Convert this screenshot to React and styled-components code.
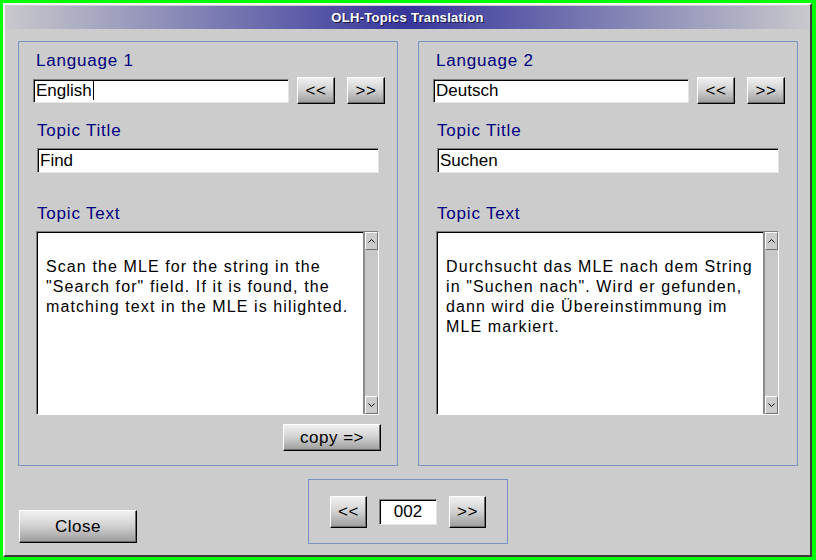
import React from "react";
import styled, { createGlobalStyle } from "styled-components";

const Global = createGlobalStyle`
  html, body {
    margin: 0;
    padding: 0;
    background: #00ff00;
  }
  body {
    font-family: "Liberation Sans", Arial, sans-serif;
  }
`;

const Window = styled.div`
  box-sizing: border-box;
  margin: 3px;
  width: 809px;
  height: 554px;
  background: #cccccc;
  border: 2px solid;
  border-color: #f4f4f4 #3a3a3a #3a3a3a #f4f4f4;
  padding: 1px;
  display: flex;
  flex-direction: column;
`;

const TitleBar = styled.div`
  height: 23px;
  display: flex;
  align-items: center;
  justify-content: center;
  background: linear-gradient(to right, #c8c8cc 0%, #36369c 50%, #c8c8cc 100%);
  color: #ffffff;
  font-weight: bold;
  font-size: 13px;
  letter-spacing: 0.3px;
  text-shadow: 1px 1px 0 #1a1a40;
`;

const Content = styled.div`
  flex: 1;
  display: flex;
  flex-direction: column;
  padding: 12px 11px 10px 12px;
`;

const Panels = styled.div`
  display: grid;
  grid-template-columns: 380px 380px;
  gap: 20px;
`;

const Group = styled.div`
  box-sizing: border-box;
  height: 425px;
  border: 1px solid #7b90c0;
  display: flex;
  flex-direction: column;
`;

const Label = styled.div`
  color: #000080;
  font-size: 17px;
  line-height: 20px;
  letter-spacing: 0.8px;
  margin-left: ${(p) => p.$left}px;
  margin-top: ${(p) => p.$top}px;
`;

const Row = styled.div`
  display: flex;
  align-items: center;
  margin-top: ${(p) => p.$top}px;
  margin-left: ${(p) => p.$left}px;
`;

const Field = styled.div`
  box-sizing: border-box;
  width: ${(p) => p.$w}px;
  height: ${(p) => p.$h}px;
  background: #ffffff;
  border: 1px solid;
  border-color: #808080 #e4e4e4 #e4e4e4 #808080;
  box-shadow: inset 1px 1px 0 #000000;
  font-size: 17px;
  color: #000;
  display: flex;
  align-items: center;
  justify-content: ${(p) => (p.$center ? "center" : "flex-start")};
  padding-left: ${(p) => (p.$center ? 0 : 2)}px;
  margin-top: ${(p) => p.$top || 0}px;
  margin-left: ${(p) => p.$left || 0}px;
`;

const Caret = styled.span`
  display: inline-block;
  width: 1px;
  height: 19px;
  background: #000;
  margin-left: 1px;
`;

const Button = styled.div`
  box-sizing: border-box;
  width: ${(p) => p.$w}px;
  height: ${(p) => p.$h}px;
  margin-left: ${(p) => p.$left || 0}px;
  border: 1px solid;
  border-color: #ffffff #000000 #000000 #ffffff;
  box-shadow: inset -1px -1px 0 #6a6a6a;
  background: linear-gradient(to bottom, #f0f0f0 0%, #d4d4d4 45%, #9c9c9c 100%);
  display: flex;
  align-items: center;
  justify-content: center;
  font-size: 17px;
  letter-spacing: 0.5px;
  color: #000;
`;

const Memo = styled.div`
  box-sizing: border-box;
  width: 343px;
  height: 184px;
  margin-left: 17px;
  margin-top: 7px;
  display: flex;
  border: 1px solid;
  border-color: #808080 #ffffff #ffffff #808080;
  box-shadow: inset 1px 1px 0 #000000;
  background: #ffffff;
`;

const MemoText = styled.div`
  flex: 1;
  padding: 25px 0 0 9px;
  font-size: 16px;
  line-height: 20px;
  letter-spacing: 1.1px;
  white-space: pre-line;
  color: #000;
`;

const ScrollBar = styled.div`
  width: 13px;
  border-left: 2px solid #8c8c8c;
  background: #c8c8c8;
  display: flex;
  flex-direction: column;
  justify-content: space-between;
`;

const ScrollArrow = styled.div`
  box-sizing: border-box;
  height: 18px;
  background: #cccccc;
  border: 1px solid;
  border-color: #ffffff #707070 #707070 #ffffff;
  display: flex;
  align-items: center;
  justify-content: center;
`;

const Footer = styled.div`
  display: flex;
  justify-content: flex-end;
  margin-top: 9px;
  margin-right: 16px;
`;

const Bottom = styled.div`
  display: grid;
  grid-template-columns: 1fr auto 1fr;
  align-items: end;
  margin-top: 13px;
`;

const CloseWrap = styled.div`
  padding-left: 1px;
  padding-bottom: 1px;
`;

const NavGroup = styled.div`
  box-sizing: border-box;
  width: 200px;
  height: 65px;
  margin-left: 0;
  border: 1px solid #7b90c0;
  display: flex;
  align-items: center;
  padding-left: 21px;
`;

function Chevron({ down }) {
  return (
    <svg width="7" height="4" viewBox="0 0 7 4">
      <path
        d={down ? "M0.5 0.5 L3.5 3.5 L6.5 0.5" : "M0.5 3.5 L3.5 0.5 L6.5 3.5"}
        stroke="#000"
        strokeWidth="1"
        fill="none"
      />
    </svg>
  );
}

function LangPanel({ lang, name, title, text, withCopy, caret }) {
  return (
    <Group>
      <Label $left={17} $top={9}>{lang}</Label>
      <Row $top={6} $left={14}>
        <Field $w={256} $h={24}>
          {name}
          {caret && <Caret />}
        </Field>
        <Button $w={38} $h={27} $left={8}>&lt;&lt;</Button>
        <Button $w={38} $h={27} $left={12}>&gt;&gt;</Button>
      </Row>
      <Label $left={18} $top={17}>Topic Title</Label>
      <Field $w={342} $h={25} $top={7} $left={18}>{title}</Field>
      <Label $left={18} $top={31}>Topic Text</Label>
      <Memo>
        <MemoText>{text}</MemoText>
        <ScrollBar>
          <ScrollArrow><Chevron /></ScrollArrow>
          <ScrollArrow><Chevron down /></ScrollArrow>
        </ScrollBar>
      </Memo>
      {withCopy && (
        <Footer>
          <Button $w={98} $h={27}>copy =&gt;</Button>
        </Footer>
      )}
    </Group>
  );
}

export default function App() {
  return (
    <>
      <Global />
      <Window>
        <TitleBar>OLH-Topics Translation</TitleBar>
        <Content>
          <Panels>
            <LangPanel
              lang="Language 1"
              name="English"
              caret
              title="Find"
              withCopy
              text={'Scan the MLE for the string in the\n"Search for" field. If it is found, the\nmatching text in the MLE is hilighted.'}
            />
            <LangPanel
              lang="Language 2"
              name="Deutsch"
              title="Suchen"
              text={'Durchsucht das MLE nach dem String\nin "Suchen nach". Wird er gefunden,\ndann wird die Übereinstimmung im\nMLE markiert.'}
            />
          </Panels>
          <Bottom>
            <CloseWrap>
              <Button $w={118} $h={33}>Close</Button>
            </CloseWrap>
            <NavGroup>
              <Button $w={37} $h={32}>&lt;&lt;</Button>
              <Field $w={58} $h={26} $left={12} $center>002</Field>
              <Button $w={37} $h={32} $left={12}>&gt;&gt;</Button>
            </NavGroup>
            <div />
          </Bottom>
        </Content>
      </Window>
    </>
  );
}
